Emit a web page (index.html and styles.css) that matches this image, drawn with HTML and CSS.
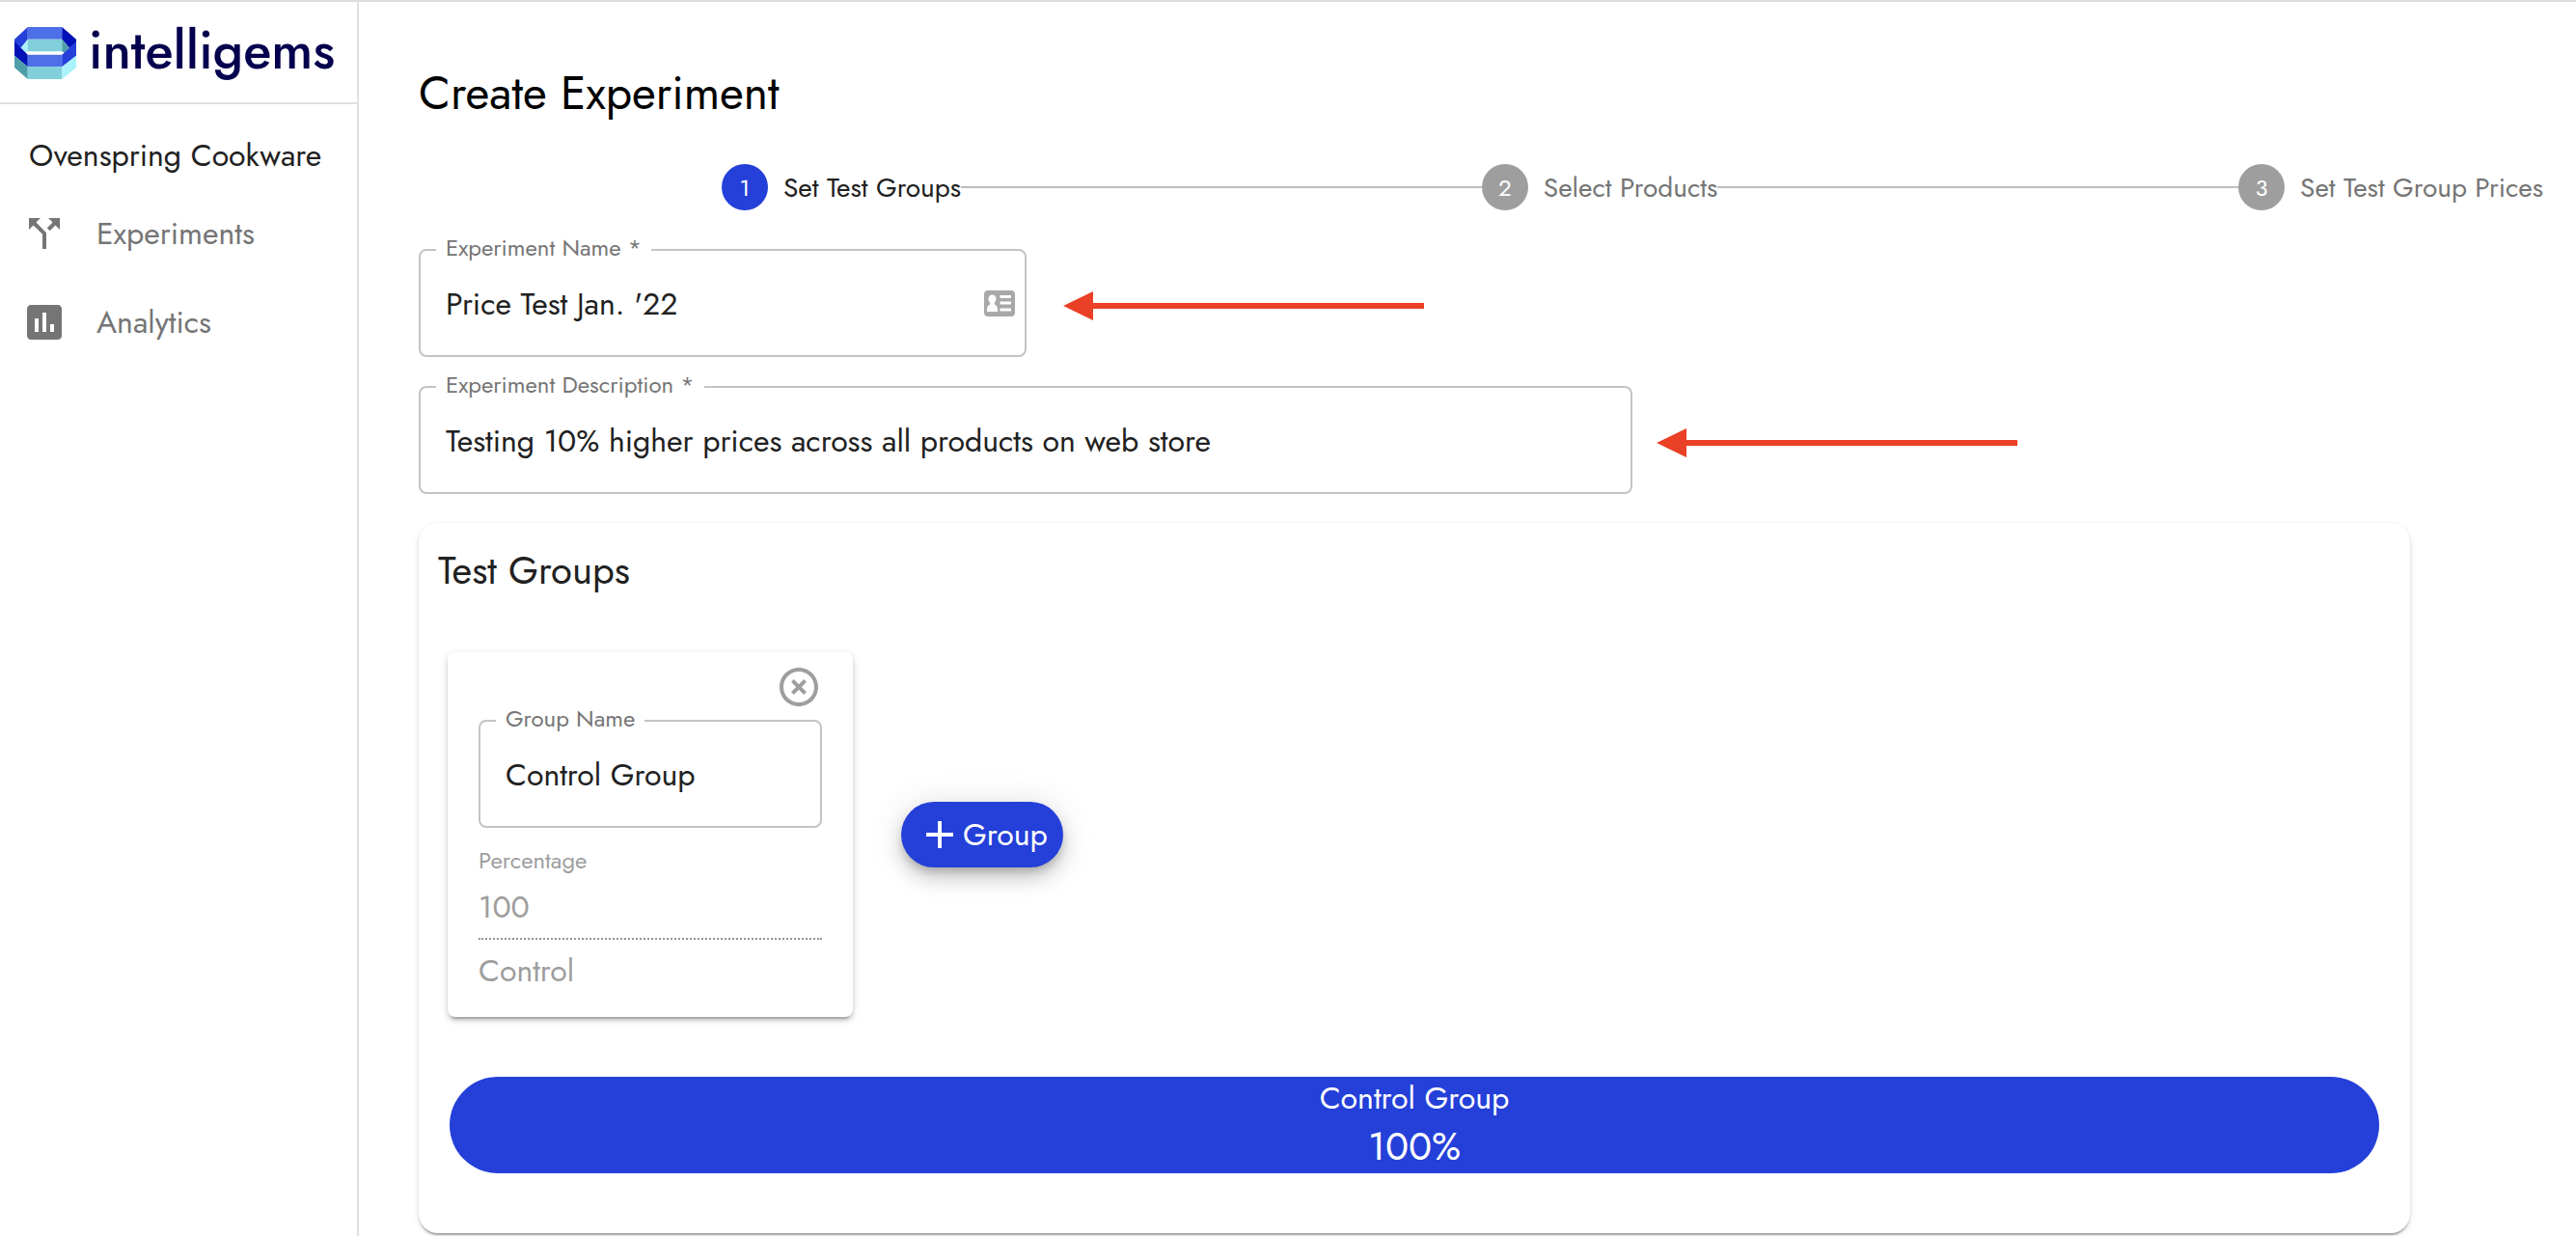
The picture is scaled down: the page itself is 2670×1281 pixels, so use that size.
FILE: index.html
```html
<!DOCTYPE html>
<html lang="en">
<head>
<meta charset="utf-8">
<meta name="viewport" content="width=device-width, initial-scale=1">
<title>Create Experiment</title>
<link rel="stylesheet" href="styles.css">
</head>
<body>
<div class="app">
  <aside class="sidebar">
    <div class="brand">
      <svg class="brand-mark" viewBox="0 0 191 161" aria-hidden="true">
        <path fill="#2440d9" d="M41 0L0 38V50L20 65L41 38Z"/>
        <path fill="#4d6fe8" d="M41 0H147V38H41Z"/>
        <path fill="#0011b5" d="M147 0L191 38V50L170 65L147 38Z"/>
        <path fill="#aaf2fc" d="M41 38L20 65L34 80L41 75Z"/>
        <path fill="#80cfdb" d="M41 38H147V75H41Z"/>
        <path fill="#4d9faa" d="M147 38L170 65L155 80L147 75Z"/>
        <path fill="#0011b5" d="M0 45L41 86V123L0 89Z"/>
        <path fill="#4d6fe8" d="M41 86H147V123H41Z"/>
        <path fill="#2440d9" d="M191 45L147 86V123L191 89Z"/>
        <path fill="#4d9faa" d="M0 89L41 123V161L0 125Z"/>
        <path fill="#80cfdb" d="M41 123H147V161H41Z"/>
        <path fill="#aaf2fc" d="M191 89L147 123V161L191 125Z"/>
      </svg>
      <span class="brand-name">intelligems</span>
    </div>
    <div class="store-name">Ovenspring Cookware</div>
    <nav>
      <a class="nav-item" href="#experiments">
        <svg class="nav-icon" viewBox="0 0 24 24" aria-hidden="true"><path d="M14 4l2.290 2.290-2.880 2.880 1.420 1.420 2.880-2.880L20 10V4zm-4 0H4v6l2.290-2.290 4.710 4.700V20h2v-8.410l-5.290-5.300z"/></svg>
        <span>Experiments</span>
      </a>
      <a class="nav-item" href="#analytics">
        <svg class="nav-icon" viewBox="0 0 24 24" aria-hidden="true"><path d="M19 3H5c-1.100 0-2 .900-2 2v14c0 1.100.900 2 2 2h14c1.100 0 2-.900 2-2V5c0-1.100-.900-2-2-2zM9 17H7v-7h2v7zm4 0h-2V7h2v10zm4 0h-2v-4h2v4z"/></svg>
        <span>Analytics</span>
      </a>
    </nav>
  </aside>

  <main class="main">
    <h1 class="page-title">Create Experiment</h1>

    <ol class="stepper">
      <li class="step active"><span class="step-number">1</span>Set Test Groups</li>
      <li class="step-line" role="presentation"></li>
      <li class="step"><span class="step-number">2</span>Select Products</li>
      <li class="step-line" role="presentation"></li>
      <li class="step"><span class="step-number">3</span>Set Test Group Prices</li>
    </ol>

    <div class="form-row">
      <fieldset class="field field-short">
        <legend><label for="experiment-name">Experiment Name *</label></legend>
        <div class="field-body">
          <input id="experiment-name" type="text" value="Price Test Jan. '22">
          <svg class="contact-icon" viewBox="0 0 32 27" aria-hidden="true">
            <rect width="32" height="27" rx="4" fill="#a8a8a8"/>
            <path fill="#fff" d="M8.500 4.500c2.500 0 4 1.800 4 4.300 0 1.700-.700 3-1.700 4v1.700c2 .800 3.200 2.500 3.200 5V22H3v-2.500c0-2.500 1.200-4.200 3.200-5v-1.700c-1-1-1.700-2.300-1.700-4 0-2.500 1.500-4.300 4-4.300zM16.500 5H28v3H16.500zM16.500 11.500H28v3H16.500zM16.500 18.500H28v3H16.500z"/>
          </svg>
        </div>
      </fieldset>
      <svg class="arrow" viewBox="0 0 374 30" aria-hidden="true"><path d="M0 15L31 0V12H374V18H31V30Z"/></svg>
    </div>

    <div class="form-row">
      <fieldset class="field field-long">
        <legend><label for="experiment-description">Experiment Description *</label></legend>
        <div class="field-body">
          <input id="experiment-description" type="text" value="Testing 10% higher prices across all products on web store">
        </div>
      </fieldset>
      <svg class="arrow" viewBox="0 0 374 30" aria-hidden="true"><path d="M0 15L31 0V12H374V18H31V30Z"/></svg>
    </div>

    <section class="panel">
      <h2 class="panel-title">Test Groups</h2>
      <div class="groups">
        <article class="group-card">
          <button class="close" type="button" aria-label="Remove group">
            <svg viewBox="0 0 24 24" aria-hidden="true"><path d="M14.590 8L12 10.590 9.410 8 8 9.410 10.590 12 8 14.590 9.410 16 12 13.410 14.590 16 16 14.590 13.410 12 16 9.410 14.590 8zM12 2C6.470 2 2 6.470 2 12s4.470 10 10 10 10-4.470 10-10S17.530 2 12 2zm0 18c-4.410 0-8-3.590-8-8s3.590-8 8-8 8 3.590 8 8-3.590 8-8 8z"/></svg>
          </button>
          <fieldset class="field">
            <legend><label for="group-name">Group Name</label></legend>
            <div class="field-body"><input id="group-name" type="text" value="Control Group"></div>
          </fieldset>
          <label class="percent-label" for="percentage">Percentage</label>
          <input class="percent-input" id="percentage" type="text" value="100" disabled>
          <p class="group-kind">Control</p>
        </article>
        <button class="add-group" type="button">
          <svg viewBox="0 0 28 28" aria-hidden="true"><path d="M12 0H16V12H28V16H16V28H12V16H0V12H12Z"/></svg>
          Group
        </button>
      </div>
      <div class="split-bar">
        <span class="split-name">Control Group</span>
        <span class="split-value">100%</span>
      </div>
    </section>
  </main>
</div>
</body>
</html>
```
FILE: styles.css
```css
* {
  box-sizing: border-box;
}

body {
  margin: 0;
  background: #fff;
  color: #212121;
  font-family: "Jost", "Lato", sans-serif;
  font-size: 32px;
}

.app {
  display: flex;
  min-height: 100vh;
  border-top: 2px solid #dcdcdc;
}

/* Sidebar */

.sidebar {
  flex: 0 0 372px;
  border-right: 2px solid #e0e0e0;
}

.brand {
  display: flex;
  align-items: flex-start;
  gap: 13px;
  height: 106px;
  padding: 26px 15px 0;
  border-bottom: 2px solid #e0e0e0;
}

.brand-mark {
  width: 64px;
  height: 54px;
}

.brand-name {
  color: #04004d;
  font-size: 54px;
  font-weight: 500;
  line-height: 48px;
}

.store-name {
  padding: 33px 30px 15px;
  line-height: 40px;
  white-space: nowrap;
}

.nav-item {
  display: flex;
  align-items: center;
  gap: 30px;
  height: 92px;
  padding: 0 22px;
  color: #757575;
  text-decoration: none;
}

.nav-icon {
  width: 48px;
  height: 48px;
  fill: #757575;
}

/* Main column */

.main {
  flex: 1;
  min-width: 0;
  padding: 65px 34px 0 62px;
}

.page-title {
  margin: 0 0 43px;
  color: #000;
  font-size: 48px;
  font-weight: 400;
  line-height: 60px;
}

.stepper {
  display: flex;
  align-items: center;
  margin: 0 0 27px 314px;
  padding: 0;
  list-style: none;
}

.step {
  display: flex;
  align-items: center;
  gap: 16px;
  color: #757575;
  font-size: 28px;
}

.step.active {
  color: #212121;
}

.step-number {
  display: flex;
  align-items: center;
  justify-content: center;
  width: 48px;
  height: 48px;
  border-radius: 50%;
  background: #9e9e9e;
  color: #fff;
  font-size: 24px;
}

.step.active .step-number {
  background: #2440d9;
}

.step-line {
  flex: 1;
  height: 2px;
  background: #bdbdbd;
}

/* Outlined fields */

.form-row {
  display: flex;
  align-items: flex-end;
  margin-bottom: 17px;
}

.field {
  min-width: 0;
  margin: 0;
  padding: 0;
  border: 2px solid #c4c4c4;
  border-radius: 8px;
}

.field-short {
  flex: 0 1 630px;
}

.field-long {
  flex: 0 1 1258px;
}

.field legend {
  margin-left: 16px;
  padding: 0 10px 4px;
  color: #757575;
  font-size: 24px;
  line-height: 24px;
}

.field label {
  display: block;
}

.field-body {
  display: flex;
  align-items: center;
  padding: 0 10px 12px 26px;
}

.field input {
  flex: 1;
  width: 100%;
  min-width: 0;
  height: 83px;
  padding: 0;
  border: 0;
  outline: 0;
  background: transparent;
  color: #212121;
  font: inherit;
}

.contact-icon {
  width: 32px;
  height: 27px;
}

.arrow {
  width: 374px;
  height: 30px;
  margin-bottom: 38px;
  fill: #ea4025;
}

.field-short + .arrow {
  margin-left: 38px;
}

.field-long + .arrow {
  margin-left: 25px;
}

/* Test groups panel */

.panel {
  margin: 30px 138px 0 0;
  padding: 25px 0 62px;
  border-radius: 20px;
  box-shadow: 0 4px 2px -2px rgba(0, 0, 0, 0.2), 0 2px 2px rgba(0, 0, 0, 0.14), 0 2px 6px rgba(0, 0, 0, 0.12);
}

.panel-title {
  margin: 0 0 61px;
  padding: 0 20px;
  font-size: 40px;
  font-weight: 400;
  line-height: 48px;
}

.groups {
  display: flex;
  align-items: center;
  gap: 50px;
  padding: 0 30px;
}

.group-card {
  display: flex;
  flex: 0 1 420px;
  flex-direction: column;
  min-width: 0;
  padding: 12px 32px 28px;
  border-radius: 8px;
  box-shadow: 0 6px 2px -4px rgba(0, 0, 0, 0.2), 0 4px 4px rgba(0, 0, 0, 0.14), 0 2px 10px rgba(0, 0, 0, 0.12);
}

.close {
  align-self: flex-end;
  width: 48px;
  height: 48px;
  margin-bottom: -3px;
  padding: 0;
  border: 0;
  background: none;
}

.close svg {
  display: block;
  fill: #9e9e9e;
}

.percent-label {
  margin: 22px 0 12px;
  color: #9e9e9e;
  font-size: 24px;
  line-height: 24px;
}

.percent-input {
  width: 100%;
  height: 58px;
  padding: 0 0 8px;
  border: 0;
  border-bottom: 2px dotted #949494;
  border-radius: 0;
  background: transparent;
  color: #9e9e9e;
  font: inherit;
}

.group-kind {
  margin: 12px 0 0;
  color: #9e9e9e;
  line-height: 40px;
}

.add-group {
  display: flex;
  align-items: center;
  gap: 10px;
  height: 68px;
  padding: 0 16px 0 26px;
  border: 0;
  border-radius: 34px;
  background: #2440d9;
  box-shadow: 0 6px 10px -2px rgba(0, 0, 0, 0.2), 0 12px 20px rgba(0, 0, 0, 0.14), 0 2px 36px rgba(0, 0, 0, 0.12);
  color: #fff;
  font: inherit;
}

.add-group svg {
  width: 28px;
  height: 28px;
  fill: #fff;
}

.split-bar {
  display: flex;
  flex-direction: column;
  align-items: center;
  margin: 62px 32px 0;
  border-radius: 50px;
  background: #2440d9;
  color: #fff;
}

.split-name {
  line-height: 45px;
}

.split-value {
  font-size: 40px;
  line-height: 55px;
}
```
